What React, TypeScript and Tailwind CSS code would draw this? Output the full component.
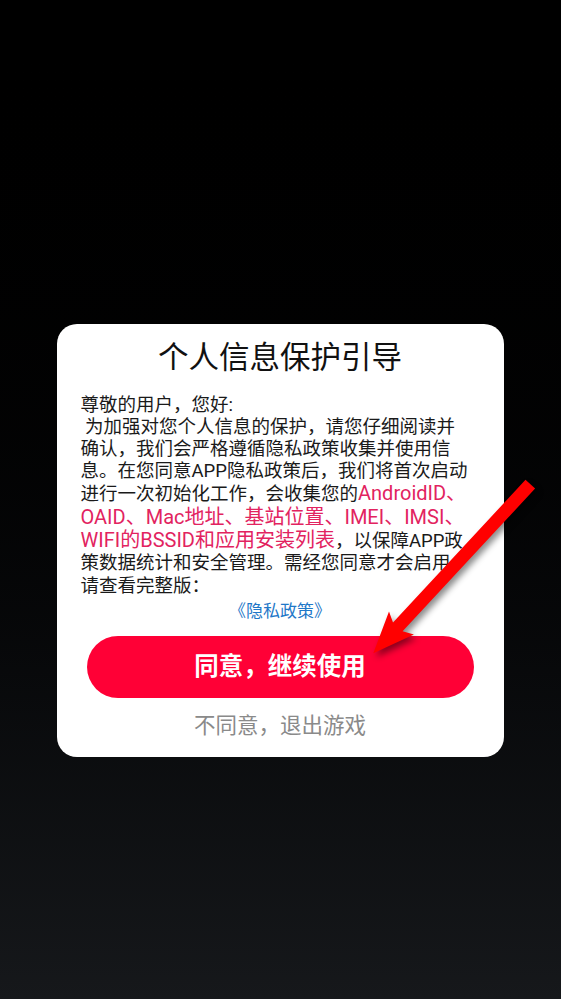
import React from 'react';

const FONT = 'font-["Roboto","Noto_Sans_CJK_SC",sans-serif]';

export default function App() {
  return (
    <main className={`relative w-full h-[999px] overflow-hidden bg-gradient-to-b from-[#000000] to-[#16181b] ${FONT}`}>
      <div className="pt-[324px] flex justify-center">
        {/* Dialog card */}
        <div className="w-[447px] ml-[-1px] bg-white rounded-[20px] pt-[14px] pb-[16px] flex flex-col">
          <h1 className="text-center text-[30.5px] leading-[40px] font-normal text-[#111]">个人信息保护引导</h1>

          <div className="mt-[16px] px-[24px] text-[18.5px] text-[#1a1a1a] whitespace-pre">
            <div className="h-[22px] leading-[22px]">尊敬的用户，您好:</div>
            <div className="h-[22px] leading-[22px]"> 为加强对您个人信息的保护，请您仔细阅读并</div>
            <div className="h-[22px] leading-[22px]">确认，我们会严格遵循隐私政策收集并使用信</div>
            <div className="h-[22px] leading-[22px]">息。在您同意APP隐私政策后，我们将首次启动</div>
            <div className="h-[23px] leading-[23px]">
              进行一次初始化工作，会收集您的<span className="text-[20px] text-[#e2235f]">AndroidID、</span>
            </div>
            <div className="h-[24px] leading-[24px] text-[20px] text-[#e2235f]">OAID、Mac地址、基站位置、IMEI、IMSI、</div>
            <div className="h-[23px] leading-[23px]">
              <span className="text-[20px] text-[#e2235f]">WIFI的BSSID和应用安装列表</span>，以保障APP政
            </div>
            <div className="h-[23px] leading-[23px]">策数据统计和安全管理。需经您同意才会启用</div>
            <div className="h-[23px] leading-[23px]">请查看完整版：</div>
          </div>

          <div className="mt-[2px] text-center text-[17px] leading-[22px] text-[#1f78c8]">《隐私政策》</div>

          <button className="mt-[14px] mx-[30px] h-[62px] rounded-full bg-[#ff0036] text-white text-[24.5px] font-bold">
            同意，继续使用
          </button>

          <div className="mt-[13px] text-center text-[21.5px] leading-[30px] text-[#8a8a8a]">不同意，退出游戏</div>
        </div>
      </div>

      {/* Red pointer arrow overlay */}
      <svg
        className="absolute inset-0 pointer-events-none drop-shadow-[3px_4px_3px_rgba(0,0,0,0.45)]"
        width="561"
        height="999"
        viewBox="0 0 561 999"
      >
        <polygon
          points="373.3,653.3 389,611.4 393,622.5 525.5,479.8 535.1,488.6 402.6,631.3 413.9,634.5"
          fill="#ff0000"
        />
      </svg>
    </main>
  );
}
